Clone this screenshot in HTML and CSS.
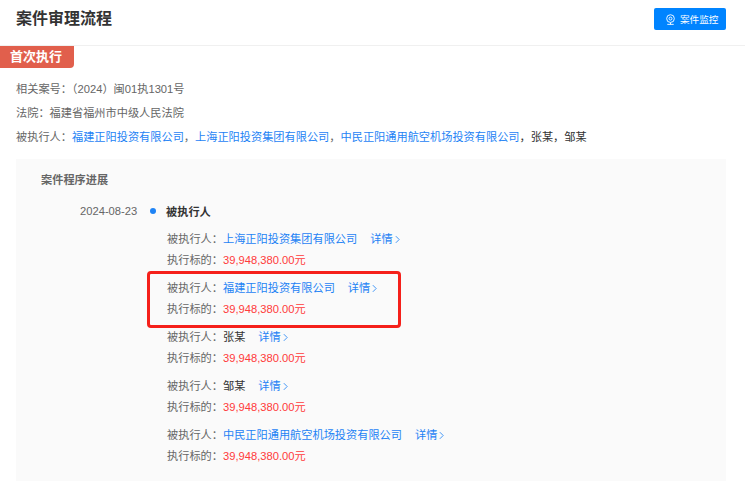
FILE: index.html
```html
<!DOCTYPE html>
<html lang="zh">
<head>
<meta charset="utf-8">
<title>案件审理流程</title>
<link rel="stylesheet" href="styles.css">
</head>
<body>
<div class="page">
  <header class="header">
    <h1 class="title">案件审理流程</h1>
    <a class="monitor">
      <svg class="monitor-icon" viewBox="0 0 12 12" width="11" height="11" fill="none" stroke="#fff" stroke-width="1">
        <circle cx="6" cy="5" r="4.2"/><circle cx="6" cy="5" r="1.6"/><path d="M2.5 11.3h7M6 9.3v2"/>
      </svg>
      <span>案件监控</span>
    </a>
  </header>
  <div class="tag">首次执行</div>
  <section class="info">
    <p>相关案号：（2024）闽01执1301号</p>
    <p>法院：福建省福州市中级人民法院</p>
    <p>被执行人：<a class="link">福建正阳投资有限公司</a>，<a class="link">上海正阳投资集团有限公司</a>，<a class="link">中民正阳通用航空机场投资有限公司</a><span class="dark">，张某，邹某</span></p>
  </section>
  <section class="panel">
    <h2 class="panel-title">案件程序进展</h2>
    <div class="event">
      <span class="date">2024-08-23</span>
      <span class="dot"></span>
      <strong class="event-name">被执行人</strong>
    </div>
    <div class="groups">
      <div class="group">
        <p>被执行人：<a class="link">上海正阳投资集团有限公司</a><a class="more">详情<svg class="chev" viewBox="0 0 6 10" width="5" height="9"><path d="M1 1l4 4-4 4" fill="none" stroke="currentColor"/></svg></a></p>
        <p>执行标的：<span class="money">39,948,380.00元</span></p>
      </div>
      <div class="group highlighted">
        <p>被执行人：<a class="link">福建正阳投资有限公司</a><a class="more">详情<svg class="chev" viewBox="0 0 6 10" width="5" height="9"><path d="M1 1l4 4-4 4" fill="none" stroke="currentColor"/></svg></a></p>
        <p>执行标的：<span class="money">39,948,380.00元</span></p>
        <div class="annotation"></div>
      </div>
      <div class="group">
        <p>被执行人：<span class="dark">张某</span><a class="more">详情<svg class="chev" viewBox="0 0 6 10" width="5" height="9"><path d="M1 1l4 4-4 4" fill="none" stroke="currentColor"/></svg></a></p>
        <p>执行标的：<span class="money">39,948,380.00元</span></p>
      </div>
      <div class="group">
        <p>被执行人：<span class="dark">邹某</span><a class="more">详情<svg class="chev" viewBox="0 0 6 10" width="5" height="9"><path d="M1 1l4 4-4 4" fill="none" stroke="currentColor"/></svg></a></p>
        <p>执行标的：<span class="money">39,948,380.00元</span></p>
      </div>
      <div class="group">
        <p>被执行人：<a class="link">中民正阳通用航空机场投资有限公司</a><a class="more">详情<svg class="chev" viewBox="0 0 6 10" width="5" height="9"><path d="M1 1l4 4-4 4" fill="none" stroke="currentColor"/></svg></a></p>
        <p>执行标的：<span class="money">39,948,380.00元</span></p>
      </div>
    </div>
  </section>
</div>
</body>
</html>
```
FILE: styles.css
```css
* { box-sizing: border-box; }
html, body { margin: 0; padding: 0; background: #fff; }
body {
  width: 745px;
  height: 484px;
  overflow: hidden;
  font-family: "Liberation Sans", "Noto Sans CJK SC", sans-serif;
  font-size: 11.2px;
  color: #666;
}
p { margin: 0; }
.header {
  height: 46px;
  padding: 8px 19px 0 16px;
  display: flex;
  justify-content: space-between;
  align-items: flex-start;
  border-bottom: 1px solid #f0f0f0;
}
.title {
  margin: 0;
  font-size: 16px;
  line-height: 22px;
  font-weight: 700;
  color: #333;
}
.monitor {
  width: 72px;
  height: 22px;
  background: #0084ff;
  border-radius: 2px;
  color: #fff;
  font-size: 9.6px;
  display: flex;
  align-items: center;
  gap: 4px;
  padding-left: 11px;
}
.monitor-icon { flex: none; }
.tag {
  width: 74px;
  height: 22px;
  margin-top: 0;
  padding-left: 10px;
  background: #e15f4c;
  border-bottom-right-radius: 4px;
  color: #fff;
  font-size: 13px;
  line-height: 21px;
  font-weight: 700;
}
.info { padding: 9px 16px 0; }
.info p { line-height: 24px; }
.link { color: #1e83f5; }
.dark { color: #333; }
.panel {
  margin: 10px 19px 0 16px;
  height: 322px;
  background: #fafafa;
  padding: 13px 0 0 25px;
}
.panel-title {
  margin: 0;
  font-size: 11.2px;
  line-height: 16px;
  font-weight: 700;
  color: #666;
}
.event {
  margin-top: 15px;
  display: flex;
  align-items: center;
  height: 16px;
  padding-left: 39px;
}
.date { width: 70px; color: #666; }
.dot {
  width: 6px;
  height: 6px;
  border-radius: 50%;
  background: #1e83f5;
  margin-right: 10px;
}
.event-name { color: #333; font-weight: 700; }
.groups {
  margin-top: 10px;
  padding-left: 126px;
  display: flex;
  flex-direction: column;
  gap: 7px;
}
.group { position: relative; }
.group p { line-height: 21px; height: 21px; }
.money { color: #ff3b3b; }
.more { color: #1e83f5; margin-left: 13px; }
.chev { margin-left: 2px; vertical-align: -1px; }
.annotation {
  position: absolute;
  left: -20px;
  top: -7px;
  width: 254px;
  height: 57px;
  border: 3px solid #f5201a;
  border-radius: 4px;
}
```
